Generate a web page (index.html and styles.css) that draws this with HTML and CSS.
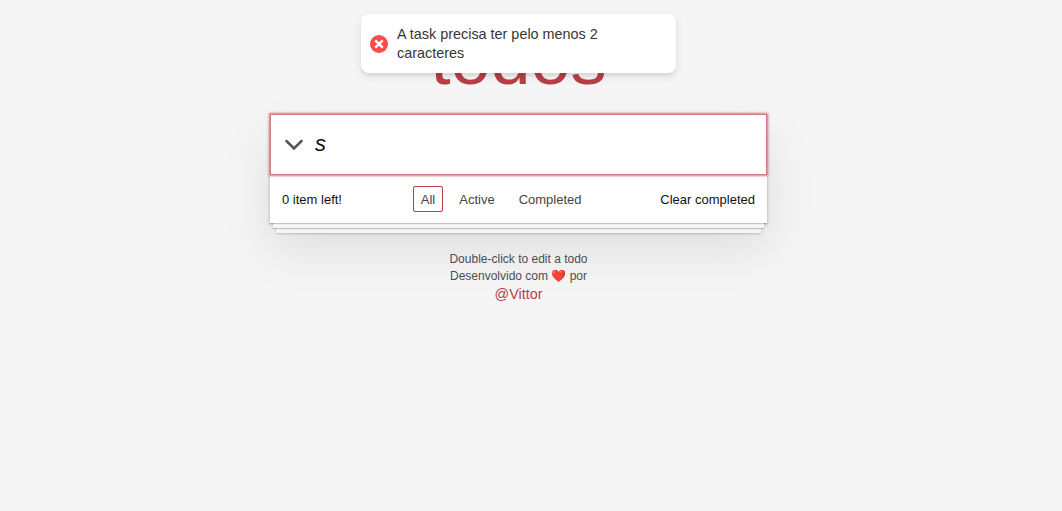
FILE: index.html
```html
<!DOCTYPE html>
<html lang="pt-BR">
<head>
<meta charset="utf-8">
<title>todos</title>
<link rel="stylesheet" href="styles.css">
</head>
<body>
<div class="toast" role="alert">
  <svg class="toast-icon" viewBox="0 0 18 18" aria-hidden="true"><circle cx="9" cy="9" r="9" fill="#ff4b4b"/><path d="M5.3 5.3l7.4 7.4M12.7 5.3l-7.4 7.4" stroke="#fff" stroke-width="2.4"/></svg>
  <p class="toast-text">A task precisa ter pelo menos 2 caracteres</p>
</div>
<main class="app">
  <h1 class="title">todos</h1>
  <section class="card">
    <form class="entry">
      <button class="toggle-all" type="button" aria-label="Toggle all"><svg viewBox="0 0 20 14" aria-hidden="true"><path d="M2.5 3l7.5 7.5L17.5 3" fill="none" stroke="#555" stroke-width="2.5" stroke-linecap="round"/></svg></button>
      <input class="new-todo" type="text" value="s" aria-label="New todo">
    </form>
    <div class="bar">
      <span class="count">0 item left!</span>
      <nav class="filters">
        <button class="filter selected" type="button">All</button>
        <button class="filter" type="button">Active</button>
        <button class="filter" type="button">Completed</button>
      </nav>
      <button class="clear" type="button">Clear completed</button>
    </div>
  </section>
  <footer class="info">
    <p>Double-click to edit a todo</p>
    <p>Desenvolvido com ❤️ por</p>
    <a class="author" href="#">@Vittor</a>
  </footer>
</main>
</body>
</html>
```
FILE: styles.css
```css
* { box-sizing: border-box; }
body {
  margin: 0;
  padding: 0 25px 0 0;
  background: #f5f5f5;
  color: #111;
  font: 13px/18px "Liberation Sans", Arial, sans-serif;
}
button { padding: 0; border: 0; background: none; color: inherit; font: inherit; }
p { margin: 0; }
.toast {
  position: absolute;
  z-index: 2;
  top: 14px;
  left: calc(50% - 170px);
  display: flex;
  align-items: center;
  gap: 9px;
  width: 315px;
  padding: 11px 9px 10px;
  border-radius: 8px;
  background: #fff;
  color: #363636;
  box-shadow: 0 3px 10px rgba(0, 0, 0, .1), 0 3px 3px rgba(0, 0, 0, .05);
}
.toast-icon { flex: none; width: 18px; height: 18px; }
.toast-text { max-width: 230px; font-size: 14.4px; line-height: 19px; }
.app { max-width: 497px; margin: 0 auto; padding-top: 19px; }
.title {
  margin: 0 0 15px;
  color: #b83f45;
  font-size: 72px;
  font-weight: 400;
  line-height: 80px;
  text-align: center;
}
.card { background: #fff; box-shadow: 0 2px 4px rgba(0, 0, 0, .2), 0 25px 50px rgba(0, 0, 0, .1); }
.entry {
  position: relative;
  display: flex;
  align-items: center;
  height: 61px;
  border: 1px solid #cf7d7d;
  box-shadow: 0 0 2px 1px #cf7d7d;
}
.toggle-all { display: flex; width: 44px; padding: 1px 0 0 13px; }
.toggle-all svg { width: 20px; height: 14px; }
.new-todo {
  flex: 1;
  min-width: 0;
  height: 100%;
  padding: 0 0 2px;
  border: 0;
  outline: 0;
  background: none;
  color: #111;
  font: italic 22px "Liberation Sans", Arial, sans-serif;
}
.bar {
  display: flex;
  justify-content: space-between;
  align-items: center;
  padding: 11px 12px;
  box-shadow: 0 1px 1px rgba(0, 0, 0, .2), 0 8px 0 -3px #f6f6f6, 0 9px 1px -3px rgba(0, 0, 0, .2), 0 16px 0 -6px #f6f6f6, 0 17px 2px -6px rgba(0, 0, 0, .2);
}
.count, .clear { padding-top: 2px; }
.filters { display: flex; gap: 8px; color: #444; }
.filter { padding: 4px 7px 2px; border: 1px solid transparent; border-radius: 2px; }
.filter.selected { border-color: #b83f45; }
.info { padding-top: 28px; color: #4d4d4d; font-size: 12px; line-height: 17px; text-align: center; }
.author { color: #b83f45; font-size: 14.4px; line-height: 18px; text-decoration: none; }
```
